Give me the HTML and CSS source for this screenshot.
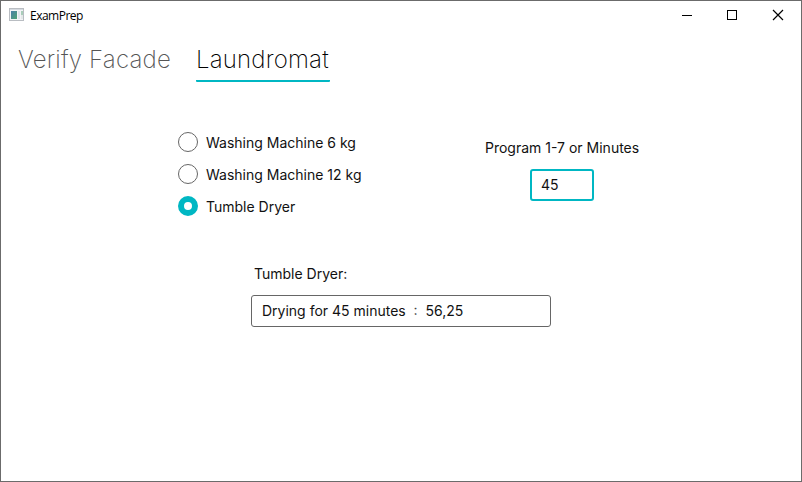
FILE: index.html
```html
<!DOCTYPE html>
<html lang="en">
<head>
<meta charset="utf-8">
<title>ExamPrep</title>
<link rel="stylesheet" href="styles.css">
</head>
<body>
<div class="window">
  <header class="titlebar">
    <svg class="app-icon" width="16" height="16" viewBox="0 0 16 16">
      <defs>
        <linearGradient id="pane" x1="0" y1="0" x2="1" y2="1">
          <stop offset="0" stop-color="#4a7fa8"/><stop offset="1" stop-color="#4fa374"/>
        </linearGradient>
      </defs>
      <rect x=".5" y="1.5" width="14" height="12" fill="#f3f4f6" stroke="#b9bdc2"/>
      <path d="M1 2.5h13" stroke="#d5dae0"/>
      <rect x="2" y="4" width="6" height="8" fill="url(#pane)"/>
      <rect x="9" y="4" width="2" height="8" fill="#e0e4eb"/>
      <rect x="12" y="4" width="2" height="4" fill="#a9cdb9"/>
      <rect x="12" y="8" width="2" height="4" fill="#e4e8e8"/>
    </svg>
    <span class="title">ExamPrep</span>
    <div class="controls">
      <svg width="46" height="28" viewBox="0 0 46 28"><path d="M18 14.5h10"/></svg>
      <svg width="46" height="28" viewBox="0 0 46 28"><path d="M17.5 9.5h9v9h-9z"/></svg>
      <svg width="46" height="28" viewBox="0 0 46 28"><path class="close" d="M17 9l10 10M27 9l-10 10"/></svg>
    </div>
  </header>
  <nav class="tabs">
    <div class="tab verify">Verify Facade</div>
    <div class="tab active">Laundromat</div>
  </nav>
  <main>
    <section class="options">
      <div class="radios">
        <div class="radio"><span class="dot"></span><span class="caption">Washing Machine 6 kg</span></div>
        <div class="radio"><span class="dot"></span><span class="caption">Washing Machine 12 kg</span></div>
        <div class="radio"><span class="dot checked"></span><span class="caption">Tumble Dryer</span></div>
      </div>
      <div class="program">
        <div class="label">Program 1-7 or Minutes</div>
        <div class="field focused">45</div>
      </div>
    </section>
    <section class="result">
      <div class="label">Tumble Dryer:</div>
      <div class="field">Drying for 45 minutes&nbsp; <span class="colon">:</span>&nbsp; 56,25</div>
    </section>
  </main>
</div>
</body>
</html>
```
FILE: styles.css
```css
* { box-sizing: border-box; }
body { margin: 0; font-family: Inter, "Liberation Sans", sans-serif; font-size: 14px; line-height: 20px; color: #111; }
.window { width: 802px; height: 482px; border: 1px solid #6b6b6b; background: #fff; overflow: hidden; }
.titlebar { display: flex; height: 30px; padding-left: 8px; }
.app-icon { margin-top: 6px; }
.title { margin: 5px 0 0 5px; font: 12px/20px "Open Sans", "Noto Sans", sans-serif; letter-spacing: -0.5px; color: #000; }
.controls { display: flex; margin-left: auto; margin-right: -1px; }
.controls path { fill: none; stroke: #000; stroke-width: 1; shape-rendering: crispEdges; }
.controls .close { shape-rendering: auto; stroke-width: 1.2; }
.tabs { display: flex; height: 51px; padding-left: 17px; font-size: 24px; font-weight: 200; letter-spacing: 0.2px; line-height: 30px; white-space: nowrap; }
.tab { padding-top: 14px; }
.verify { width: 178px; color: #555; }
.active { width: 134px; color: #000; border-bottom: 2px solid #00b7c3; border-radius: 1px; }
.options { display: flex; padding: 44px 0 0 177px; }
.radios { width: 307px; }
.radio { display: flex; align-items: center; height: 32px; gap: 8px; }
.caption { padding-top: 2px; }
.dot { width: 20px; height: 20px; border: 1px solid #666; border-radius: 50%; }
.dot.checked { border: 6px solid #00b7c3; }
.program { padding-top: 12px; width: 154px; white-space: nowrap; }
.field { height: 32px; padding: 5px 10px; border: 1px solid #666; border-radius: 3px; white-space: nowrap; }
.program .field { width: 64px; margin: 11px auto 0; }
.field.focused { border: 2px solid #00b7c3; padding: 4px 9px; }
.result { width: 300px; margin: 42px 0 0 250px; }
.result .label { padding-left: 3px; margin-bottom: 11px; }
.colon { display: inline-block; transform: translateY(-1px); color: #444; }
```
